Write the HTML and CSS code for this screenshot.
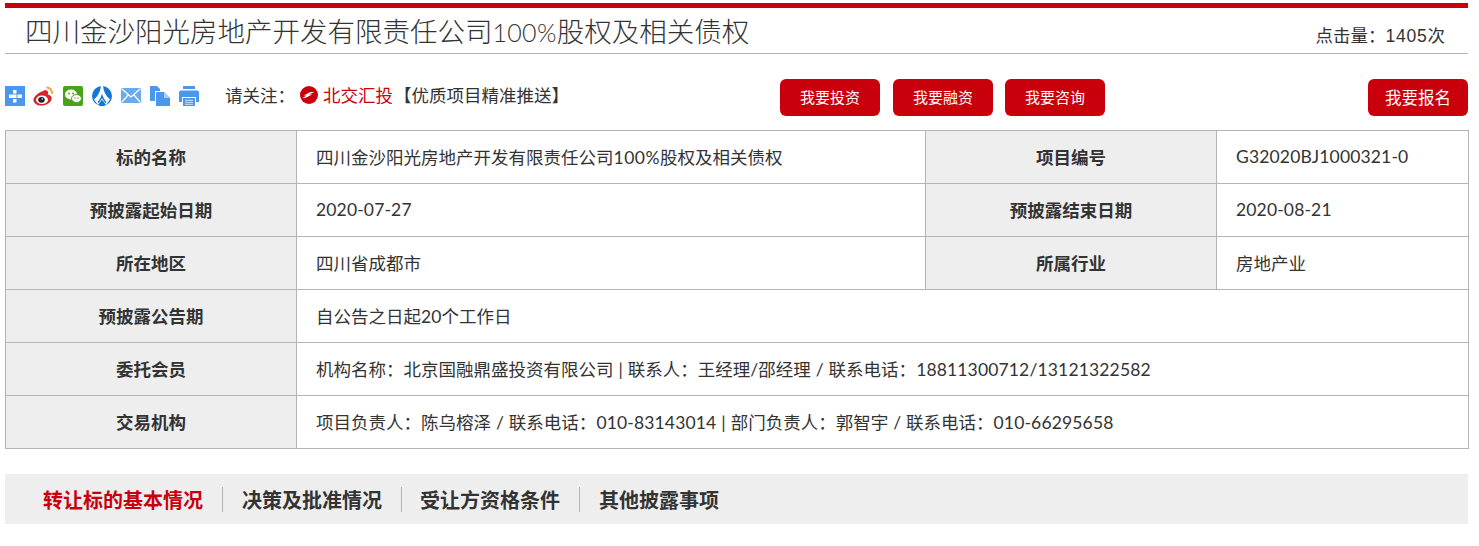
FILE: index.html
```html
<!DOCTYPE html>
<html lang="zh">
<head>
<meta charset="utf-8">
<title>项目详情</title>
<link rel="stylesheet" href="styles.css">
</head>
<body>
<div class="page">
  <header class="head">
    <h1 class="title">四川金沙阳光房地产开发有限责任公司<span class="title-num">100%</span>股权及相关债权</h1>
    <div class="clicks">点击量：<span class="clicks-num">1405</span>次</div>
  </header>
  <div class="toolbar">
    <div class="icons">
      <svg class="ic" viewBox="0 0 20 20"><rect width="20" height="20" fill="#4a97ee"/><path d="M8 4h3.500v3.500H8zM4 8.500h7.500V12H4zM12.500 8.500H17V12h-4.500zM8 13h3.500v3.500H8z" fill="#fff"/></svg>
      <svg class="ic ic-wb" viewBox="0 0 20 20"><path d="M8.500 5.500c3-2 5.500-1.500 6 .5.300 1-.2 2-.2 2.500 3 .8 4.500 2.500 3.700 5C17 17 12.500 19.500 8 19.500 3.500 19.500 0 17.500 0 14c0-3 3.500-6.500 8.500-8.500z" fill="#d8232a"/><ellipse cx="8.500" cy="13.800" rx="6" ry="4.300" fill="#fff"/><ellipse cx="8" cy="13.800" rx="3.300" ry="2.900" fill="#222"/><circle cx="8.800" cy="13" r=".8" fill="#fff"/><path d="M13 .5c4 0 7 3.500 6.500 7.500l-2-.5c.3-2.500-2-5-4.500-5z" fill="#f0a840"/></svg>
      <svg class="ic" viewBox="0 0 20 20"><rect width="20" height="20" rx="2" fill="#4aa316"/><ellipse cx="8" cy="8.500" rx="6" ry="5" fill="#fff"/><ellipse cx="13.500" cy="12.500" rx="5" ry="4" fill="#fff" stroke="#4aa316"/><circle cx="6" cy="7.500" r=".9" fill="#4aa316"/><circle cx="10" cy="7.500" r=".9" fill="#4aa316"/><circle cx="12" cy="12" r=".7" fill="#4aa316"/><circle cx="15" cy="12" r=".7" fill="#4aa316"/></svg>
      <svg class="ic" viewBox="0 0 20 20"><circle cx="10" cy="10" r="10" fill="#1577d2"/><path d="M9 0h2c.8 6 3 10 7 13.500L14 19l-4-5.500L6 19l-4-5.500C6 10 8.200 6 9 0z" fill="#fff"/><path d="M10 7.500c-.8 3.500-2.500 6.500-4.500 8.500l1 1.200 3.500-5 3.500 5 1-1.200c-2-2-3.700-5-4.500-8.500zM7 20h6l-3-4z" fill="#1577d2"/></svg>
      <svg class="ic" viewBox="0 0 20 20"><rect y="2" width="20" height="15" rx="1.500" fill="#6aabee"/><path d="M1 3l9 8 9-8M1 16l6.500-7.500M19 16l-6.500-7.500" fill="none" stroke="#fff" stroke-width="1.200"/></svg>
      <svg class="ic" viewBox="0 0 20 20"><path d="M0 0h7l3 3v2H5v10H0z" fill="#4a97ee"/><path d="M6 6h8l6 6v8H6z" fill="#4a97ee"/><path d="M14 6v6h6z" fill="#a9cdf5"/></svg>
      <svg class="ic" viewBox="0 0 20 20"><path d="M4 0h12v3H4z" fill="#4a97ee"/><path d="M2 4.500h16a2 2 0 0 1 2 2V16h-3v-5H3v5H0V6.500a2 2 0 0 1 2-2z" fill="#4a97ee"/><path d="M4 12h12v8H4z" fill="#4a97ee"/><path d="M6 14.300h8M6 16.300h8M6 18.300h8" stroke="#cfe2f8" stroke-width="1"/></svg>
    </div>
    <div class="follow">
      <span>请关注：</span>
      <svg class="logo" viewBox="0 0 20 20"><circle cx="10" cy="10" r="10" fill="#c9000b"/><path d="M4 10.500l6-3c1.500-.7 4-.8 6-.8l-6 2.800h3.500l-6 3c-1.500.7-3 .8-5 .8l5-2.800z" fill="#fff"/></svg>
      <a class="brand">北交汇投</a><span>【优质项目精准推送】</span>
    </div>
    <div class="actions">
      <a class="btn">我要投资</a>
      <a class="btn">我要融资</a>
      <a class="btn">我要咨询</a>
    </div>
    <a class="btn btn-signup">我要报名</a>
  </div>
  <table class="info">
    <colgroup><col class="c1"><col class="c2"><col class="c3"><col class="c4"></colgroup>
    <tr><th>标的名称</th><td>四川金沙阳光房地产开发有限责任公司<span class="pct">100%</span>股权及相关债权</td><th>项目编号</th><td><span class="n">G32020BJ1000321-0</span></td></tr>
    <tr><th>预披露起始日期</th><td><span class="n">2020-07-27</span></td><th>预披露结束日期</th><td><span class="n">2020-08-21</span></td></tr>
    <tr><th>所在地区</th><td>四川省成都市</td><th>所属行业</th><td>房地产业</td></tr>
    <tr><th>预披露公告期</th><td colspan="3">自公告之日起<span class="n">20</span>个工作日</td></tr>
    <tr><th>委托会员</th><td colspan="3">机构名称：北京国融鼎盛投资有限公司 | 联系人：王经理/邵经理 / 联系电话：<span class="n">18811300712/13121322582</span></td></tr>
    <tr><th>交易机构</th><td colspan="3">项目负责人：陈乌榕泽 / 联系电话：<span class="n">010-83143014</span> | 部门负责人：郭智宇 / 联系电话：<span class="n">010-66295658</span></td></tr>
  </table>
  <nav class="tabs">
    <a class="tab tab-on">转让标的基本情况</a>
    <a class="tab">决策及批准情况</a>
    <a class="tab tab-tight">受让方资格条件</a>
    <a class="tab">其他披露事项</a>
  </nav>
</div>
</body>
</html>
```
FILE: styles.css
```css
* { box-sizing: border-box; }
html, body { margin: 0; padding: 0; background: #fff; overflow: hidden; }
body { font-family: "Liberation Sans", "Noto Sans CJK SC", sans-serif; color: #333; }
.page { width: 1463px; margin: 3px 0 0 5px; }
.head { height: 51px; border-top: 5px solid #c9000b; border-bottom: 1px solid #b4b4b4; display: flex; justify-content: space-between; }
.title { margin: 0; padding: 9px 0 0 20px; font-size: 27.500px; line-height: 30px; font-weight: 300; white-space: nowrap; color: #333; }
.title-num { font-family: Lato, "Liberation Sans", sans-serif; font-size: 25px; letter-spacing: .3px; }
.clicks { padding: 17px 23px 0 0; font-size: 17.500px; line-height: 22px; }
.clicks-num { letter-spacing: .75px; }
.toolbar { height: 76px; display: flex; align-items: flex-start; padding-top: 25px; }
.icons { display: flex; gap: 9px; padding-top: 7px; }
.ic { width: 20px; height: 20px; display: block; }
.ic-wb { width: 21px; margin: 0 0 0 -1px; }
.follow { display: flex; align-items: center; width: 555px; margin-left: 26px; height: 31px; font-size: 17.500px; white-space: nowrap; }
.logo { width: 18px; height: 18px; margin: 0 5px 0 5px; }
.brand { color: #c9000b; margin-right: 1px; }
.actions { display: flex; gap: 13px; }
.btn { display: flex; align-items: center; justify-content: center; width: 100px; height: 37px; padding-bottom: 2px; border-radius: 6px; background: #c9000b; color: #fff; font-size: 15px; }
.actions .btn:nth-child(2) { margin-right: -1px; }
.btn-signup { margin-left: auto; font-size: 16.500px; }
.info { width: 1463px; table-layout: fixed; border-collapse: collapse; }
.c1 { width: 291px; } .c2 { width: 629px; } .c3 { width: 291px; } .c4 { width: 252px; }
.info th, .info td { height: 53px; border: 1px solid #b4b4b4; padding: 0 0 2px; font-size: 17.500px; white-space: nowrap; }
.info th { background: #eee; font-weight: 700; text-align: center; }
.info td { text-align: left; padding-left: 19px; font-family: Lato, "Noto Sans CJK SC", sans-serif; word-spacing: .5px; }
.n { letter-spacing: .15px; }
.pct { letter-spacing: .5px; }
.tabs { margin-top: 25px; height: 50px; padding: 1px 0 0 19px; background: #eee; display: flex; align-items: center; }
.tab { height: 25px; padding: 0 19px; font-size: 20px; font-weight: 700; line-height: 28px; border-left: 1px solid #b4b4b4; }
.tab:first-child { border-left: 0; }
.tab-tight { padding: 0 19px 0 18px; }
.tab-on { color: #c9000b; }
```
